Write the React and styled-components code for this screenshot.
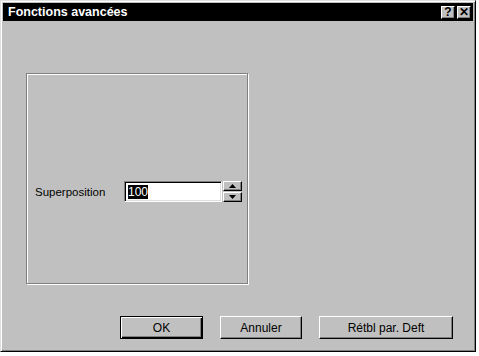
import React from "react";
import styled, { createGlobalStyle } from "styled-components";

const Global = createGlobalStyle`
  html, body { margin: 0; padding: 0; background: #ffffff; }
  body { font-family: "Liberation Sans", Arial, sans-serif; }
`;

const Window = styled.div`
  box-sizing: border-box;
  width: 476px;
  height: 352px;
  background: #c0c0c0;
  border-top: 1px solid #dfdfdf;
  border-left: 1px solid #dfdfdf;
  border-right: 1px solid #000;
  border-bottom: 1px solid #000;
  box-shadow: inset 1px 1px 0 #fff, inset -1px -1px 0 #808080;
  padding: 2px;
  display: flex;
  flex-direction: column;
`;

const TitleBar = styled.div`
  height: 18px;
  background: #000;
  display: flex;
  align-items: center;
  justify-content: space-between;
  padding: 0 2px 0 5px;
`;

const Title = styled.span`
  color: #fff;
  font-weight: bold;
  font-size: 12.5px;
`;

const TitleButtons = styled.div`
  display: flex;
  gap: 2px;
`;

const TitleButton = styled.div`
  box-sizing: border-box;
  width: 14px;
  height: 13px;
  background: #c0c0c0;
  border-top: 1px solid #fff;
  border-left: 1px solid #fff;
  border-right: 1px solid #000;
  border-bottom: 1px solid #000;
  box-shadow: inset -1px -1px 0 #808080;
  display: flex;
  align-items: center;
  justify-content: center;
  font-weight: bold;
  font-size: 12px;
  line-height: 1;
  color: #000;
`;

const Body = styled.div`
  flex: 1;
  display: flex;
  flex-direction: column;
  padding: 52px 20px 0 23px;
`;

const GroupBox = styled.div`
  box-sizing: border-box;
  width: 222px;
  height: 211px;
  border: 1px solid #808080;
  box-shadow: inset 1px 1px 0 #fff, 1px 1px 0 #fff;
  padding: 107px 0 0 8px;
`;

const FieldRow = styled.div`
  display: flex;
  align-items: center;
`;

const Label = styled.span`
  font-size: 11.5px;
  color: #000;
  width: 89px;
`;

const TextBox = styled.div`
  box-sizing: border-box;
  width: 98px;
  height: 21px;
  background: #fff;
  border-top: 1px solid #808080;
  border-left: 1px solid #808080;
  border-right: 1px solid #fff;
  border-bottom: 1px solid #fff;
  box-shadow: inset 1px 1px 0 #000, inset -1px -1px 0 #dfdfdf;
  display: flex;
  align-items: center;
  padding-left: 3px;
`;

const Selected = styled.span`
  background: #000;
  color: #fff;
  font-size: 12px;
  line-height: 14px;
`;

const Spinner = styled.div`
  display: flex;
  flex-direction: column;
  margin-left: 1px;
  height: 21px;
`;

const SpinButton = styled.div`
  box-sizing: border-box;
  width: 19px;
  height: 10px;
  background: #c0c0c0;
  border-top: 1px solid #fff;
  border-left: 1px solid #fff;
  border-right: 1px solid #000;
  border-bottom: 1px solid #000;
  box-shadow: inset -1px -1px 0 #808080;
  display: flex;
  align-items: center;
  justify-content: center;
  & + & { margin-top: 1px; }
`;

const ButtonRow = styled.div`
  display: flex;
  justify-content: flex-end;
  gap: 17px;
  margin-top: 32px;
`;

const Button = styled.div`
  box-sizing: border-box;
  width: ${(p) => p.$w}px;
  height: 23px;
  background: #c0c0c0;
  border-top: 1px solid ${(p) => (p.$default ? "#000" : "#fff")};
  border-left: 1px solid ${(p) => (p.$default ? "#000" : "#fff")};
  border-right: 1px solid #000;
  border-bottom: 1px solid #000;
  box-shadow: ${(p) =>
    p.$default
      ? "inset 1px 1px 0 #fff, inset -1px -1px 0 #000, inset -2px -2px 0 #808080"
      : "inset -1px -1px 0 #808080"};
  display: flex;
  align-items: center;
  justify-content: center;
  font-size: 12px;
  color: #000;
`;

const Arrow = ({ up }) => (
  <svg width="7" height="4" viewBox="0 0 7 4">
    <path d={up ? "M3.5 0 L7 4 L0 4 Z" : "M0 0 L7 0 L3.5 4 Z"} fill="#000" />
  </svg>
);

export default function App() {
  return (
    <>
      <Global />
      <Window>
        <TitleBar>
          <Title>Fonctions avancées</Title>
          <TitleButtons>
            <TitleButton>?</TitleButton>
            <TitleButton>✕</TitleButton>
          </TitleButtons>
        </TitleBar>
        <Body>
          <GroupBox>
            <FieldRow>
              <Label>Superposition</Label>
              <TextBox>
                <Selected>100</Selected>
              </TextBox>
              <Spinner>
                <SpinButton>
                  <Arrow up />
                </SpinButton>
                <SpinButton>
                  <Arrow />
                </SpinButton>
              </Spinner>
            </FieldRow>
          </GroupBox>
          <ButtonRow>
            <Button $w={83} $default>OK</Button>
            <Button $w={82}>Annuler</Button>
            <Button $w={134}>Rétbl par. Deft</Button>
          </ButtonRow>
        </Body>
      </Window>
    </>
  );
}
